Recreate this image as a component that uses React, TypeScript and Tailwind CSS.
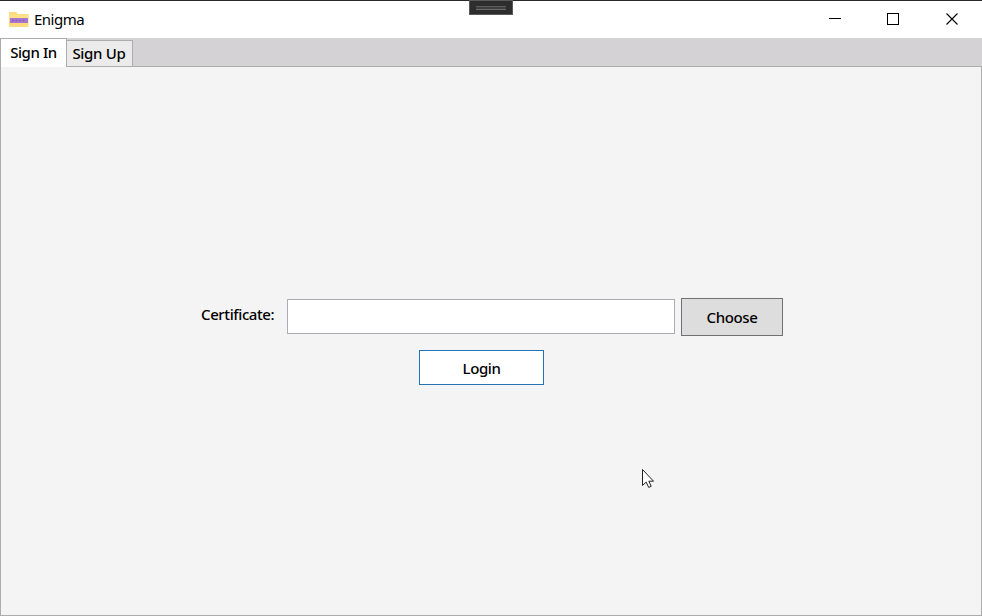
import React from "react";

function TitleBar() {
  return (
    <header className="relative flex h-[38px] shrink-0 items-center border-t border-[#2b292c] bg-white pl-2">
      <svg width="22" height="20" viewBox="0 0 22 20" className="shrink-0">
        <path d="M1 2h7l2 2h10.5v13H1z" fill="#ffda7b" />
        <path d="M1 4.5h19.5v3H1z" fill="#ffe08c" />
        <rect x="2" y="8" width="18" height="5" fill="#a877cf" />
        <path d="M4 10.5h2m1.500 0h2m1.500 0h2m1.500 0h2" stroke="#8d60bd" strokeWidth="1.500" />
      </svg>
      <span className="mb-[2px] ml-1 text-[15px] leading-5 tracking-[-0.5px]">Enigma</span>
      <div className="absolute left-[469px] -top-px flex h-[15px] w-[44px] flex-col items-center justify-center border border-[#59595a] bg-[#2d2d2e]">
        <div className="h-px w-[30px] bg-[#5c5c5d]" />
        <div className="h-[2px] w-[30px] bg-[#3f3f40]" />
        <div className="h-px w-[30px] bg-[#6a6a6b]" />
      </div>
      <div className="ml-auto flex h-full">
        <svg width="153" height="37" viewBox="0 0 153 37" fill="none" stroke="#000" shapeRendering="crispEdges">
          <path d="M0 17.500h12" />
          <rect x="58.500" y="12.500" width="11" height="11" />
          <path d="M117.500 12.500l11 11M128.500 12.500l-11 11" shapeRendering="geometricPrecision" strokeWidth="1.100" />
        </svg>
      </div>
    </header>
  );
}

function Tabs() {
  return (
    <nav className="flex h-[28px] shrink-0 items-end bg-[#d4d2d4]">
      <div className="relative z-10 -mb-px flex h-[29px] w-[67px] items-center justify-center border border-b-0 border-[#acacac] bg-white pb-[2px]">
        <span className="text-[15px] font-medium leading-5 tracking-[-0.42px]">Sign In</span>
      </div>
      <div className="flex h-[26px] w-[66px] items-center justify-center border border-b-0 border-l-0 border-[#acacac] bg-[#ebebeb] pb-[2px] pr-px">
        <span className="text-[15px] font-medium leading-5 tracking-[-0.3px]">Sign Up</span>
      </div>
    </nav>
  );
}

export default function App() {
  return (
    <div className="relative flex h-[616px] w-[982px] flex-col overflow-hidden bg-white font-['Noto_Sans','Open_Sans',sans-serif] text-black">
      <TitleBar />
      <Tabs />
      <main className="flex flex-1 flex-col border border-[#acacac] bg-[#f4f4f4] pt-[230px] text-[15px] font-medium tracking-[-0.4px]">
        <div className="flex h-[39px] items-start pl-[200px]">
          <label htmlFor="cert" className="mt-[7px] w-[86px] leading-5">Certificate:</label>
          <input id="cert" className="mt-[2px] h-[35px] w-[388px] border border-[#abadb3] bg-white outline-none" />
          <button className="ml-[6px] mt-px flex h-[38px] w-[102px] items-center justify-center border border-[#707070] bg-[#dddddd]">Choose</button>
        </div>
        <button className="ml-[418px] mt-[14px] flex h-[35px] w-[125px] items-center justify-center border border-[#2473b3] bg-white pt-px">Login</button>
      </main>
      <svg width="14" height="21" viewBox="0 0 14 21" className="absolute left-[641px] top-[468px]">
        <path d="M1.500 1.500v16l3.700-3.400 2.500 5.300 2.500-1.100-2.400-5.100h4.700z" fill="#fff" stroke="#222" />
      </svg>
    </div>
  );
}
